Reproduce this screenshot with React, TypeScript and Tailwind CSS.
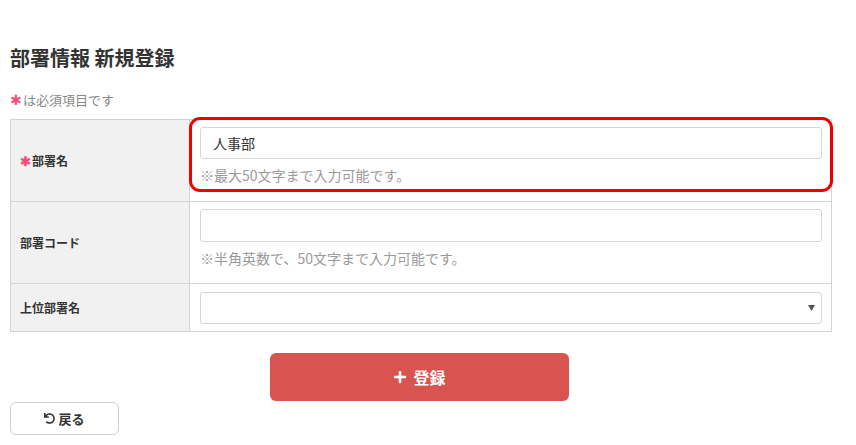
import React from 'react';
import { FaPlus, FaUndo } from 'react-icons/fa';

const font = { fontFamily: '"Noto Sans CJK JP", "Noto Sans", sans-serif' };

const Req = ({ size = 'text-[13px]' }: { size?: string }) => (
  <span className={`mr-[1px] ${size} text-[#f0507f]`}>✱</span>
);

export default function App() {
  return (
    <div className="min-h-[445px] w-[856px] bg-white text-[#333]" style={font}>
      <div className="px-[10px] pt-[44px]">
        <h1 className="text-[20px] font-bold leading-[28px] text-[#333]">部署情報 新規登録</h1>
        <p className="mt-[18px] text-[13px] leading-[18px] text-[#888]">
          <Req size="text-[14px]" />は必須項目です
        </p>

        {/* Form table */}
        <div className="relative mt-[10px] w-[822px] border border-[#d4d4d4]">
          <div className="flex h-[82px] border-b border-[#d4d4d4]">
            <div className="flex w-[179px] shrink-0 items-center border-r border-[#d4d4d4] bg-[#f1f1f1] pl-[9px] text-[12px] font-bold">
              <Req />部署名
            </div>
            <div className="flex-1 pl-[10px] pr-[9px] pt-[7px]">
              <div className="flex h-[32px] items-center rounded-[3px] border border-[#d6d6d6] px-[12px] text-[14px] text-[#333]">人事部</div>
              <p className="mt-[6px] text-[14px] leading-[20px] text-[#9a9a9a]">※最大50文字まで入力可能です。</p>
            </div>
          </div>
          <div className="flex h-[82px] border-b border-[#d4d4d4]">
            <div className="flex w-[179px] shrink-0 items-center border-r border-[#d4d4d4] bg-[#f1f1f1] pl-[9px] text-[12px] font-bold">
              部署コード
            </div>
            <div className="flex-1 pl-[10px] pr-[9px] pt-[7px]">
              <div className="h-[33px] rounded-[3px] border border-[#d6d6d6]" />
              <p className="mt-[6px] text-[14px] leading-[20px] text-[#9a9a9a]">※半角英数で、50文字まで入力可能です。</p>
            </div>
          </div>
          <div className="flex h-[47px]">
            <div className="flex w-[179px] shrink-0 items-center border-r border-[#d4d4d4] bg-[#f1f1f1] pl-[9px] text-[12px] font-bold">
              上位部署名
            </div>
            <div className="flex-1 pl-[10px] pr-[9px] pt-[8px]">
              <div className="flex h-[32px] items-center justify-end rounded-[3px] border border-[#d6d6d6] pr-[6px]">
                <svg width="7" height="6" viewBox="0 0 7 6"><path d="M0 0h7L3.5 6z" fill="#555" /></svg>
              </div>
            </div>
          </div>

          {/* annotation highlight */}
          <div className="pointer-events-none absolute left-[178px] top-[-3px] h-[75px] w-[644px] rounded-[11px] border-[3px] border-[#ee0000]" />
        </div>

        <div className="flex w-[819px] justify-center pt-[21px]">
          <button className="flex h-[48px] w-[299px] items-center justify-center gap-[6px] rounded-[6px] bg-[#d9534f] text-[16px] font-bold text-white">
            <FaPlus className="h-[14px] w-[14px]" />登録
          </button>
        </div>

        <button className="mt-[1px] flex h-[33px] w-[109px] items-center justify-center gap-[3px] rounded-[6px] border border-[#cfcfcf] bg-white text-[13px] font-bold text-[#333]">
          <FaUndo className="h-[11px] w-[11px]" />戻る
        </button>
      </div>
    </div>
  );
}
